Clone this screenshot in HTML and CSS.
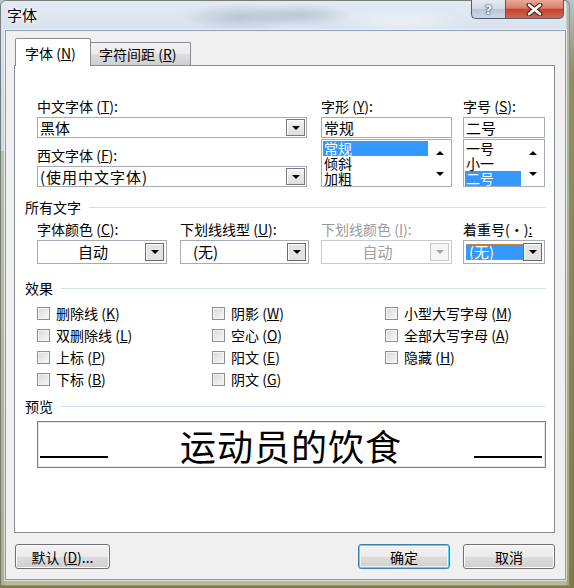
FILE: index.html
```html
<!DOCTYPE html>
<html lang="zh-CN">
<head>
<meta charset="utf-8">
<title>字体</title>
<link rel="stylesheet" href="styles.css">
</head>
<body>
<div class="window">
  <div class="titlebar">
    <span class="title">字体</span>
    <div class="caption">
      <div class="cbtn help"><span class="q">?</span></div>
      <div class="cbtn close">
        <svg width="17" height="13" viewBox="0 0 17 13">
          <path d="M3 2 L14 11 M14 2 L3 11" stroke="#5a2a22" stroke-width="5" stroke-linecap="round"/>
          <path d="M3 2 L14 11 M14 2 L3 11" stroke="#ffffff" stroke-width="2.6" stroke-linecap="round"/>
        </svg>
      </div>
    </div>
  </div>

  <div class="client">
    <div class="tabs">
      <div class="tab active">字体 (<u>N</u>)</div>
      <div class="tab">字符间距 (<u>R</u>)</div>
    </div>

    <div class="panel">
      <div class="row1">
        <div class="col-font">
          <div class="lbl">中文字体 (<u>T</u>):</div>
          <div class="combo c1"><span class="val">黑体</span><span class="abtn"><i class="tri"></i></span></div>
          <div class="lbl mt9">西文字体 (<u>F</u>):</div>
          <div class="combo c1"><span class="val wide">(使用中文字体)</span><span class="abtn"><i class="tri"></i></span></div>
        </div>
        <div class="col-style">
          <div class="lbl">字形 (<u>Y</u>):</div>
          <div class="textbox">常规</div>
          <div class="listbox">
            <div class="items">
              <div class="item sel">常规</div>
              <div class="item">倾斜</div>
              <div class="item">加粗</div>
            </div>
            <div class="vscroll"><i class="tri up"></i><i class="tri"></i></div>
          </div>
        </div>
        <div class="col-size">
          <div class="lbl">字号 (<u>S</u>):</div>
          <div class="textbox">二号</div>
          <div class="listbox">
            <div class="items">
              <div class="item">一号</div>
              <div class="item">小一</div>
              <div class="item sel">二号</div>
            </div>
            <div class="vscroll"><i class="tri up"></i><i class="tri"></i></div>
          </div>
        </div>
      </div>

      <div class="sec s1">所有文字</div>
      <div class="row2">
        <div class="cell w130">
          <div class="lbl">字体颜色 (<u>C</u>):</div>
          <div class="combo c2"><span class="val center">自动</span><span class="abtn dark"><i class="tri"></i></span></div>
        </div>
        <div class="cell w129">
          <div class="lbl">下划线线型 (<u>U</u>):</div>
          <div class="combo c2"><span class="val pad">(无)</span><span class="abtn dark"><i class="tri"></i></span></div>
        </div>
        <div class="cell w131">
          <div class="lbl dis">下划线颜色 (<u>I</u>):</div>
          <div class="combo c2 disabled"><span class="val center">自动</span><span class="abtn"><i class="tri"></i></span></div>
        </div>
        <div class="cell w82">
          <div class="lbl">着重号(·)<u>:</u></div>
          <div class="combo c2 focus"><span class="val"><span class="selv">(无)</span></span><span class="abtn dark"><i class="tri"></i></span></div>
        </div>
      </div>

      <div class="sec s2">效果</div>
      <div class="effects">
        <div class="chk"><i class="box"></i>删除线 (<u>K</u>)</div>
        <div class="chk"><i class="box"></i>双删除线 (<u>L</u>)</div>
        <div class="chk"><i class="box"></i>上标 (<u>P</u>)</div>
        <div class="chk"><i class="box"></i>下标 (<u>B</u>)</div>
        <div class="chk"><i class="box"></i>阴影 (<u>W</u>)</div>
        <div class="chk"><i class="box"></i>空心 (<u>O</u>)</div>
        <div class="chk"><i class="box"></i>阳文 (<u>E</u>)</div>
        <div class="chk"><i class="box"></i>阴文 (<u>G</u>)</div>
        <div class="chk"><i class="box"></i>小型大写字母 (<u>M</u>)</div>
        <div class="chk"><i class="box"></i>全部大写字母 (<u>A</u>)</div>
        <div class="chk"><i class="box"></i>隐藏 (<u>H</u>)</div>
      </div>

      <div class="sec s3">预览</div>
      <div class="preview">
        <span class="uline"></span>
        <span class="ptext">运动员的饮食</span>
        <span class="uline"></span>
      </div>
    </div>

    <div class="buttons">
      <div class="btn b-def">默认 (<u>D</u>)...</div>
      <div class="btn b-ok">确定</div>
      <div class="btn b-cancel">取消</div>
    </div>
  </div>
</div>
</body>
</html>
```

FILE: styles.css
```css
* { box-sizing: border-box; }
html, body { margin: 0; padding: 0; }
body {
  width: 574px;
  height: 588px;
  overflow: hidden;
  background: linear-gradient(180deg, #b8c4cc 0, #8f8e62 70px, #7d7a4a 100%);
  font-family: "Noto Sans CJK SC", "Noto Sans", sans-serif;
  color: #000;
}
u { text-decoration: underline; text-underline-offset: 1px; }

.window {
  width: 570px;
  height: 586px;
  border: 1px solid rgba(70, 80, 95, 0.55);
  border-radius: 6px 6px 0 0;
  background:
    linear-gradient(90deg, transparent 0, transparent 565px, rgba(150, 148, 100, 0.55) 566px),
    linear-gradient(90deg, rgba(170, 168, 120, 0.5) 0, rgba(170, 168, 120, 0.5) 3px, transparent 4px) 0 150px / 100% 100% no-repeat,
    radial-gradient(ellipse 60px 14px at 240px 16px, rgba(120, 135, 155, 0.35), transparent),
    radial-gradient(ellipse 50px 12px at 300px 14px, rgba(110, 125, 145, 0.3), transparent),
    radial-gradient(ellipse 70px 14px at 400px 20px, rgba(255, 255, 255, 0.45), transparent),
    linear-gradient(180deg, #e2eaf4 0, #d8e2ee 30px, #ccd6e0 160px, #c3c8b8 400px, #b8ba9a 100%);
  display: flex;
  flex-direction: column;
}

/* title bar */
.titlebar {
  height: 29px;
  display: flex;
  align-items: flex-start;
}
.title {
  margin: 5px 0 0 6px;
  font-size: 15px;
  line-height: 17px;
  text-shadow: 0 0 6px #fff, 0 0 3px #fff;
}
.caption {
  margin-left: auto;
  margin-right: 5px;
  margin-top: -1px;
  display: flex;
}
.cbtn {
  height: 19px;
  border: 1px solid #4f5d70;
  border-top: none;
  display: flex;
  align-items: center;
  justify-content: center;
}
.help {
  width: 34px;
  border-right: none;
  border-radius: 0 0 0 5px;
  background: linear-gradient(180deg, #e4ebf3 0, #d0dae6 50%, #b9c6d5 51%, #cbd7e4 100%);
}
.q {
  font-family: "DejaVu Sans", sans-serif;
  font-weight: bold;
  font-size: 13px;
  line-height: 13px;
  color: #f4f7fb;
  text-shadow: 0 0 1px #3c4a5c, 0 0 1px #3c4a5c, 0 0 2px #3c4a5c;
}
.close {
  width: 59px;
  border-radius: 0 0 5px 0;
  background: linear-gradient(180deg, #e9a897 0, #d9806c 45%, #c4452f 52%, #d5644d 100%);
}

/* client */
.client {
  flex: 1;
  margin: 0 3px 5px 4px;
  border: 1px solid #8c9bad;
  box-shadow: 0 0 0 1px rgba(255, 255, 255, 0.55);
  background: #f0f0f0;
  padding: 7px 10px 10px 8px;
  display: flex;
  flex-direction: column;
}

.tabs {
  height: 27px;
  display: flex;
  align-items: flex-end;
  padding-left: 1px;
}
.tab {
  font-size: 14px;
  white-space: nowrap;
  border: 1px solid #898c95;
  border-bottom: none;
  display: flex;
  align-items: center;
}
.tab.active {
  width: 76px;
  height: 28px;
  margin-bottom: -1px;
  background: #fff;
  position: relative;
  z-index: 1;
  padding-left: 9px;
  border-radius: 2px 2px 0 0;
}
.tab:not(.active) {
  width: 101px;
  height: 23px;
  margin-left: -1px;
  padding-left: 8px;
  background: linear-gradient(180deg, #f2f2f2 0, #ebebeb 50%, #dddddd 51%, #cfcfcf 100%);
  border-radius: 2px 2px 0 0;
}

.panel {
  height: 468px;
  border: 1px solid #898c95;
  background: #fff;
  padding: 32px 8px 0 10px;
  display: flex;
  flex-direction: column;
}

.lbl {
  font-size: 14px;
  line-height: 16px;
  height: 16px;
  white-space: nowrap;
  margin-bottom: 3px;
}
.lbl.dis { color: #9a9a9a; }
.mt9 { margin-top: 9px; }

.row1 {
  display: flex;
  margin-left: 12px;
}
.col-font { width: 270px; margin-right: 14px; }
.col-style { width: 131px; margin-right: 11px; }
.col-size { width: 82px; }

.combo {
  display: flex;
  border: 1px solid #a5acb5;
  background: #fff;
  padding: 1px;
}
.combo.c1 { height: 21px; }
.combo.c2 { height: 24px; padding: 2px; }
.val {
  flex: 1;
  font-size: 15px;
  line-height: 16px;
  padding-left: 1px;
  white-space: nowrap;
  display: flex;
  align-items: center;
}
.val.wide { letter-spacing: 1px; }
.val.center { justify-content: center; }
.val.pad { padding-left: 10px; }
.abtn {
  width: 19px;
  border: 1px solid #7a7a7a;
  background: linear-gradient(180deg, #f4f4f4, #dedede);
  box-shadow: inset 1px 1px 0 #fff;
  display: flex;
  align-items: center;
  justify-content: center;
}
.abtn.dark {
  border-color: #6a6a6a;
  background: #e3e3e3;
}
.tri {
  display: block;
  width: 0;
  height: 0;
  border-left: 4px solid transparent;
  border-right: 4px solid transparent;
  border-top: 4px solid #000;
}
.tri.up {
  border-top: none;
  border-bottom: 4px solid #000;
}
.disabled { border-color: #c7cbd1; }
.disabled .val { color: #a0a0a0; }
.disabled .abtn {
  border-color: #c9c9c9;
  background: #f6f6f6;
  box-shadow: none;
}
.disabled .tri { border-top-color: #a8a8a8; }
.focus .val { padding: 0; }
.selv {
  width: 100%;
  height: 16px;
  line-height: 15px;
  background: #3399ff;
  color: #fff;
  padding-left: 3px;
  outline: 1px dotted #d08a40;
  outline-offset: -1px;
}

.textbox {
  height: 21px;
  border: 1px solid #a5acb5;
  font-size: 15px;
  line-height: 19px;
  padding-left: 2px;
  margin-bottom: 1px;
  white-space: nowrap;
}
.listbox {
  height: 48px;
  border: 1px solid #a5acb5;
  display: flex;
  overflow: hidden;
}
.items {
  flex: 1;
  padding: 1px 1px 0 1px;
  overflow: hidden;
}
.item {
  height: 15px;
  font-size: 14px;
  line-height: 15px;
  padding-left: 1px;
  white-space: nowrap;
}
.item.sel { background: #3399ff; color: #fff; }
.vscroll {
  width: 22px;
  display: flex;
  flex-direction: column;
  align-items: center;
  justify-content: space-between;
  padding: 11px 0 10px;
}

.sec {
  display: flex;
  align-items: center;
  height: 16px;
  font-size: 14px;
  line-height: 16px;
  white-space: nowrap;
}
.sec::after {
  content: "";
  flex: 1;
  border-top: 1px solid #d5dfe7;
  margin-left: 8px;
}
.s1 { margin-top: 12px; }
.s2 { margin-top: 16px; }
.s3 { margin-top: 8px; }

.row2 {
  display: flex;
  margin-left: 12px;
  margin-top: 6px;
}
.w130 { width: 130px; margin-right: 13px; }
.w129 { width: 129px; margin-right: 12px; }
.w131 { width: 131px; margin-right: 11px; }
.w82 { width: 82px; }

.effects {
  margin-top: 6px;
  margin-left: 12px;
  display: grid;
  grid-template-columns: 175px 173px auto;
  grid-template-rows: repeat(4, 22px);
  grid-auto-flow: column;
}
.chk {
  display: flex;
  align-items: center;
  font-size: 14px;
  line-height: 16px;
  white-space: nowrap;
}
.box {
  width: 13px;
  height: 13px;
  border: 1px solid #8e8f8f;
  background: linear-gradient(135deg, #d8d8d8, #f8f8f8);
  box-shadow: inset 0 0 0 1px #f4f4f4;
  margin-right: 6px;
  flex: none;
}

.preview {
  margin-top: 7px;
  margin-left: 12px;
  height: 47px;
  border: 1px solid #7f7f7f;
  box-shadow: inset 0 0 0 1px #e8e8e8;
  display: flex;
  align-items: center;
  justify-content: space-between;
  padding: 0 3px 0 2px;
}
.uline {
  width: 68px;
  border-bottom: 2px solid #000;
  align-self: flex-end;
  margin-bottom: 9px;
}
.ptext {
  font-size: 36px;
  line-height: 40px;
  letter-spacing: 1px;
}

.buttons {
  margin-top: 11px;
  display: flex;
}
.btn {
  height: 25px;
  border: 1px solid #707070;
  border-radius: 3px;
  background: linear-gradient(180deg, #f2f2f2 0, #ebebeb 50%, #dddddd 51%, #cfcfcf 100%);
  box-shadow: inset 0 0 0 1px #fcfcfc;
  font-size: 14px;
  display: flex;
  align-items: center;
  justify-content: center;
  white-space: nowrap;
}
.b-def { width: 95px; margin-left: 1px; }
.b-ok {
  width: 92px;
  margin-left: auto;
  border-color: #3c7fb1;
  box-shadow: inset 0 0 0 1px #48d8fb, inset 0 0 0 2px rgba(255, 255, 255, 0.6);
}
.b-cancel { width: 92px; margin-left: 13px; }
```
